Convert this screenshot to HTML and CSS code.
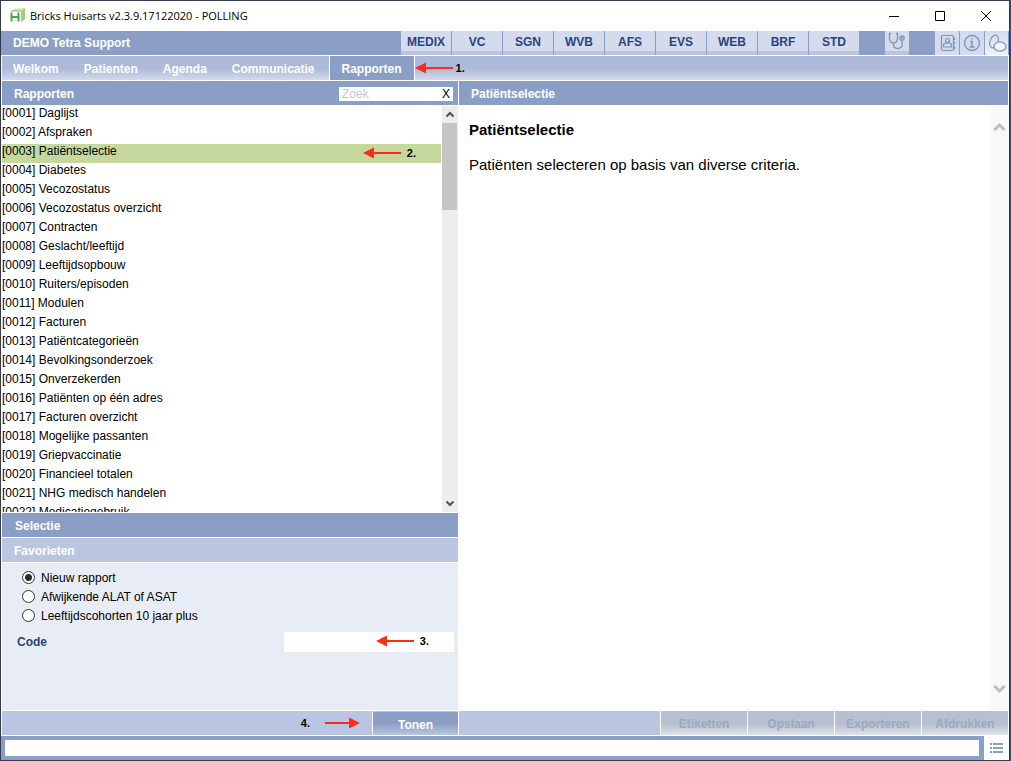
FILE: index.html
```
<!DOCTYPE html>
<html lang="nl">
<head>
<meta charset="utf-8">
<title>Bricks Huisarts</title>
<link rel="stylesheet" href="styles.css">
</head>
<body>
<div class="window">
  <header class="titlebar">
    <svg class="logo" width="16" height="16" viewBox="0 0 16 16" aria-hidden="true">
      <path d="M1 3 5 0.500 15 0 15 11 11 14 11 3z" fill="#d5e8b4"/>
      <path d="M11 3 15 0 15 11 11 14z" fill="#a5cf74"/>
      <path d="M1 3h10" stroke="#7cc05a" stroke-width="1"/>
      <path d="M1.500 4.500v9M8.500 4.500v9M1 9h8" stroke="#4aa546" stroke-width="2" fill="none"/>
    </svg>
    <h1 class="title">Bricks Huisarts v2.3.9.17122020 - POLLING</h1>
    <div class="controls">
      <button class="control" aria-label="Minimaliseren"><svg width="12" height="12" viewBox="0 0 12 12"><path d="M1 6.500h10" stroke="#000" fill="none"/></svg></button>
      <button class="control" aria-label="Maximaliseren"><svg width="12" height="12" viewBox="0 0 12 12"><path d="M1.500 1.500h9v9h-9z" stroke="#000" fill="none"/></svg></button>
      <button class="control" aria-label="Sluiten"><svg width="12" height="12" viewBox="0 0 12 12"><path d="M1 1l10 10M11 1L1 11" stroke="#000" fill="none"/></svg></button>
    </div>
  </header>

  <div class="topbar">
    <span class="practice">DEMO Tetra Support</span>
    <nav class="modules">
      <button class="module">MEDIX</button>
      <button class="module">VC</button>
      <button class="module">SGN</button>
      <button class="module">WVB</button>
      <button class="module">AFS</button>
      <button class="module">EVS</button>
      <button class="module">WEB</button>
      <button class="module">BRF</button>
      <button class="module">STD</button>
    </nav>
    <button class="tool tool-banded" aria-label="Consult">
      <svg width="24" height="24" viewBox="0 0 24 24" fill="none" stroke="#7f95bd" stroke-width="1.300"><path d="M6 2.500H4.500v4.500c0 3 1.500 5 4 5s4-2 4-5V2.500H11M8.500 12v1.500c0 2.500 1.500 4 4 4s4.500-1.500 4.500-4V9.500"/><circle cx="17" cy="7" r="2.200"/><circle cx="17" cy="7" r=".4"/></svg>
    </button>
    <div class="tools">
      <button class="tool" aria-label="Adresboek">
        <svg width="24" height="24" viewBox="0 0 24 24" fill="none" stroke="#7f95bd" stroke-width="1.200"><rect x="6.500" y="4.500" width="12" height="15" rx="1.500"/><circle cx="12.500" cy="9.500" r="2"/><path d="M8.500 16v-1.500c0-1.500 1-2.500 2.500-2.500h3c1.500 0 2.500 1 2.500 2.500V16zM19.500 6.500v2.500M19.500 11v2.500M19.500 15.500V18"/></svg>
      </button>
      <button class="tool" aria-label="Informatie">
        <svg width="24" height="24" viewBox="0 0 24 24" fill="none" stroke="#7f95bd" stroke-width="1.300"><circle cx="12" cy="12" r="7.500"/><path d="M10 10.500h2V16M9.500 16h5M11.200 7.800h1.200" stroke-width="1.500"/></svg>
      </button>
      <button class="tool tool-pale" aria-label="Berichten">
        <svg width="23" height="24" viewBox="0 0 23 24" fill="none" stroke="#7f95bd" stroke-width="1.200"><ellipse cx="9" cy="10.500" rx="4" ry="6.500" transform="rotate(20 9 10.500)"/><ellipse cx="15" cy="15.500" rx="6" ry="4.700" fill="#eef2f9"/></svg>
      </button>
    </div>
  </div>

  <nav class="menu">
    <button class="menu-item">Welkom</button>
    <button class="menu-item">Patienten</button>
    <button class="menu-item">Agenda</button>
    <button class="menu-item">Communicatie</button>
    <div class="menu-current">
      <button class="menu-item menu-item-active" aria-current="page">Rapporten</button>
      <span class="note note-1"><svg width="38" height="12" viewBox="0 0 38 12" aria-hidden="true"><path d="M0 6 11 0.500v11z" fill="#fb2c1a"/><path d="M10 6h28" stroke="#fb2c1a" stroke-width="2"/></svg>1.</span>
    </div>
  </nav>

  <main class="panes">
    <section class="pane">
      <div class="bar">
        <h2 class="bar-title">Rapporten</h2>
        <div class="search">
          <input class="search-input" type="text" placeholder="Zoek" aria-label="Zoek">
          <button class="search-clear" aria-label="Wissen">X</button>
        </div>
      </div>
      <div class="list-area">
        <ul class="list">
          <li><button class="row">[0001] Daglijst</button></li>
          <li><button class="row">[0002] Afspraken</button></li>
          <li class="list-current"><button class="row row-selected">[0003] Patiëntselectie</button>
            <span class="note note-2"><svg width="38" height="12" viewBox="0 0 38 12" aria-hidden="true"><path d="M0 6 11 0.500v11z" fill="#fb2c1a"/><path d="M10 6h28" stroke="#fb2c1a" stroke-width="2"/></svg>2.</span></li>
          <li><button class="row">[0004] Diabetes</button></li>
          <li><button class="row">[0005] Vecozostatus</button></li>
          <li><button class="row">[0006] Vecozostatus overzicht</button></li>
          <li><button class="row">[0007] Contracten</button></li>
          <li><button class="row">[0008] Geslacht/leeftijd</button></li>
          <li><button class="row">[0009] Leeftijdsopbouw</button></li>
          <li><button class="row">[0010] Ruiters/episoden</button></li>
          <li><button class="row">[0011] Modulen</button></li>
          <li><button class="row">[0012] Facturen</button></li>
          <li><button class="row">[0013] Patiëntcategorieën</button></li>
          <li><button class="row">[0014] Bevolkingsonderzoek</button></li>
          <li><button class="row">[0015] Onverzekerden</button></li>
          <li><button class="row">[0016] Patiënten op één adres</button></li>
          <li><button class="row">[0017] Facturen overzicht</button></li>
          <li><button class="row">[0018] Mogelijke passanten</button></li>
          <li><button class="row">[0019] Griepvaccinatie</button></li>
          <li><button class="row">[0020] Financieel totalen</button></li>
          <li><button class="row">[0021] NHG medisch handelen</button></li>
          <li><button class="row">[0022] Medicatiegebruik</button></li>
        </ul>
        <div class="scrollbar">
          <svg class="scroll-arrow" width="16" height="17" viewBox="0 0 16 17" aria-hidden="true"><path d="M4.500 10.500 8 7l3.500 3.500" fill="none" stroke="#505050" stroke-width="2"/></svg>
          <div class="scroll-track"><div class="scroll-thumb"></div></div>
          <svg class="scroll-arrow" width="16" height="17" viewBox="0 0 16 17" aria-hidden="true"><path d="M4.500 6.500 8 10l3.500-3.500" fill="none" stroke="#505050" stroke-width="2"/></svg>
        </div>
      </div>
      <h2 class="bar bar-section">Selectie</h2>
      <h3 class="bar bar-light">Favorieten</h3>
      <form class="form">
        <label class="option"><input class="radio" type="radio" name="favoriet" checked>Nieuw rapport</label>
        <label class="option"><input class="radio" type="radio" name="favoriet">Afwijkende ALAT of ASAT</label>
        <label class="option"><input class="radio" type="radio" name="favoriet">Leeftijdscohorten 10 jaar plus</label>
        <div class="field">
          <label class="field-label" for="code">Code</label>
          <div class="field-box">
            <input class="field-input" id="code" type="text">
            <span class="note note-3"><svg width="38" height="12" viewBox="0 0 38 12" aria-hidden="true"><path d="M0 6 11 0.500v11z" fill="#fb2c1a"/><path d="M10 6h28" stroke="#fb2c1a" stroke-width="2"/></svg>3.</span>
          </div>
        </div>
      </form>
      <div class="actions">
        <span class="note-4">4.<svg width="35" height="12" viewBox="0 0 35 12" aria-hidden="true"><path d="M35 6 24 0.500v11z" fill="#fb2c1a"/><path d="M0 6h25" stroke="#fb2c1a" stroke-width="2"/></svg></span>
        <button class="action action-primary">Tonen</button>
      </div>
    </section>

    <section class="pane">
      <div class="bar"><h2 class="bar-title">Patiëntselectie</h2></div>
      <div class="detail">
        <article class="detail-text">
          <h3 class="detail-title">Patiëntselectie</h3>
          <p class="detail-body">Patiënten selecteren op basis van diverse criteria.</p>
        </article>
        <div class="scrollbar-wide">
          <svg width="17" height="17" viewBox="0 0 17 17" aria-hidden="true"><path d="M3.500 11 8.500 6l5 5" fill="none" stroke="#bdbdbd" stroke-width="3"/></svg>
          <svg width="17" height="17" viewBox="0 0 17 17" aria-hidden="true"><path d="M3.500 6l5 5 5-5" fill="none" stroke="#bdbdbd" stroke-width="3"/></svg>
        </div>
      </div>
      <div class="actions">
        <button class="action" disabled>Etiketten</button>
        <button class="action" disabled>Opslaan</button>
        <button class="action" disabled>Exporteren</button>
        <button class="action" disabled>Afdrukken</button>
      </div>
    </section>
  </main>

  <footer class="footer">
    <div class="command"><input class="command-input" type="text" aria-label="Opdracht"></div>
    <button class="command-list" aria-label="Lijst"><svg width="13" height="10" viewBox="0 0 13 10"><path d="M0 1h2M3 1h10M0 5h2M3 5h10M0 9h2M3 9h10" stroke="#8b9fc6" stroke-width="2"/></svg></button>
  </footer>
</div>
</body>
</html>
```
FILE: styles.css
```
* { box-sizing: border-box; }

body {
  margin: 0;
  background: #3f4a75;
  color: #000;
  font: 12px/14px "Liberation Sans", Arial, sans-serif;
}

h1, h2, h3, p, ul { margin: 0; padding: 0; font-size: inherit; }
ul { list-style: none; }
svg { display: block; flex: none; }
button, input { margin: 0; padding: 0; border: 0; border-radius: 0; background: none; color: inherit; font: inherit; }

.window {
  display: flex;
  flex-direction: column;
  height: 100vh;
  margin-right: 1px;
  border: 1px solid #353a50;
  background: #fff;
}

.titlebar { display: flex; align-items: center; height: 30px; flex: none; padding-left: 9px; }
.title { margin-left: 4px; font: 11px/16px "Open Sans", "Noto Sans", sans-serif; }
.controls { display: flex; margin-left: auto; }
.control { display: grid; place-items: center; width: 46px; height: 28px; }

.topbar { display: flex; height: 24px; flex: none; padding-right: 1px; margin-bottom: 1px; background: #8b9fc6; }
.practice { flex: 1; padding-left: 12px; color: #fff; font-weight: bold; line-height: 25px; }
.modules { display: flex; gap: 1px; margin-right: 26px; }
.module {
  width: 50px;
  padding-bottom: 2px;
  background: linear-gradient(#d3dbec 20px, #bac3df 20px);
  color: #2b4380;
  font-weight: bold;
}
.tools { display: flex; gap: 1px; margin-left: 26px; }
.tool { width: 24px; background: #d3dbec; overflow: hidden; }
.tool-banded { background: linear-gradient(#d3dbec 20px, #bac3df 20px); }
.tool-pale { width: 23px; background: linear-gradient(#d3dbec, #eef2f9); }

.menu {
  display: flex;
  gap: 1px;
  height: 24px;
  flex: none;
  margin: 0 1px 1px;
  background: linear-gradient(#acb9d8 50%, #b3bedd 60%, #d2daea);
  color: #fff;
  font-weight: bold;
}
.menu-item { padding: 2px 13px 0 11px; font-weight: bold; }
.menu-current { position: relative; display: flex; }
.menu-item-active { padding: 2px 12px 0; border: solid #fff; border-width: 0 1px; background: #8b9fc6; }

.note { position: absolute; display: flex; align-items: center; gap: 3px; color: #000; font-weight: bold; font-size: 11px; pointer-events: none; }
.note-1 { left: 100%; top: 5px; }
.note-2 { right: 25px; top: 2px; gap: 6px; }
.note-3 { right: 25px; top: 2px; gap: 6px; }

.panes { display: grid; grid-template-columns: 456fr 549fr; gap: 1px; flex: 1; min-height: 0; margin: 0 1px; }
.pane { display: flex; flex-direction: column; min-width: 0; min-height: 0; }

.bar { display: flex; align-items: center; height: 24px; flex: none; padding: 1px 5px 0 12px; background: #8b9fc6; color: #fff; font-weight: bold; }
.bar-title { flex: 1; }
.bar-section { margin-top: 1px; padding-left: 13px; }
.bar-light { margin-top: 1px; background: #bac5e1; }
.search { display: flex; width: 114px; height: 14px; background: #fff; font-weight: normal; }
.search-input { flex: 1; min-width: 0; padding-left: 3px; }
.search-input::placeholder { color: #c8c8c8; opacity: 1; }
.search-clear { width: 14px; color: #000; }

.list-area { display: flex; flex: 1; min-height: 0; padding-top: 1px; }
.list { flex: 1; overflow: hidden; margin-right: 1px; }
.list-current { position: relative; }
.row { display: block; width: 100%; height: 19px; padding-bottom: 5px; line-height: 14px; text-align: left; }
.row-selected { background: #c5d79d; }

.scrollbar { display: flex; flex-direction: column; width: 16px; background: #ededed; }
.scroll-track { flex: 1; padding-right: 1px; }
.scroll-thumb { height: 87px; background: #c5c5c5; }

.form { height: 147px; flex: none; margin: 1px 0; padding: 5px 4px 0 20px; background: #e8edf5; }
.option { display: flex; align-items: center; gap: 6px; height: 19px; }
.radio { appearance: none; width: 13px; height: 13px; border: 1px solid #333; border-radius: 50%; background: #fff; }
.radio:checked { background: radial-gradient(circle, #2b2b2b 3px, #fff 4px); }
.field { display: flex; align-items: center; justify-content: space-between; margin: 7px 0 0 -5px; }
.field-label { color: #2b4380; font-weight: bold; }
.field-box { position: relative; width: 170px; }
.field-input { display: block; width: 100%; height: 20px; padding: 0 4px; background: #fff; }

.actions { display: flex; justify-content: flex-end; gap: 1px; height: 24px; flex: none; background: #bac5e1; }
.action { width: 87px; padding-top: 2px; border-left: 1px solid #fff; background: linear-gradient(#b7bfd0 55%, #dde1ea); color: #9caabd; font-weight: bold; }
.action + .action { margin-left: -1px; }
.action-primary { width: 86px; padding-top: 3px; border-top: 1px solid #bac5e1; background: linear-gradient(#8b9fc6 50%, #b9c6df); color: #fff; }
.note-4 { display: flex; align-items: center; gap: 15px; margin-right: 11px; font-weight: bold; font-size: 11px; }

.detail { display: flex; flex: 1; min-height: 0; padding: 1px 0; }
.detail-text { flex: 1; padding: 15px 10px; font-size: 15px; line-height: 18px; }
.detail-title { margin-bottom: 17px; }
.scrollbar-wide { display: flex; flex-direction: column; justify-content: space-between; width: 17px; padding: 13px 0; background: #f8f8f8; }

.footer { display: flex; height: 24px; flex: none; margin: 1px 1px 0 0; }
.command { flex: 1; padding: 4px 5px 4px 4px; background: #8b9fc6; }
.command-input { display: block; width: 100%; height: 16px; padding: 0 4px; background: #fff; }
.command-list { display: grid; place-items: center; width: 24px; }
```
